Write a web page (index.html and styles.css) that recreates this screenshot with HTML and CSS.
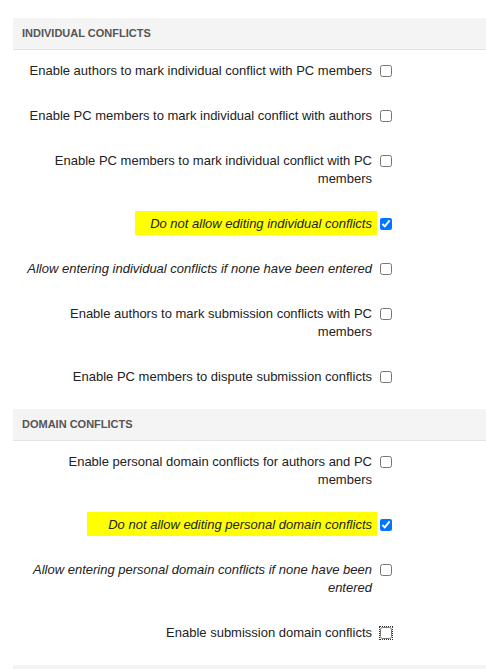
FILE: index.html
```html
<!DOCTYPE html>
<html lang="en">
<head>
    <meta charset="UTF-8">
    <meta name="viewport" content="width=device-width, initial-scale=1.0">
    <title>Conflict settings</title>
    <link rel="stylesheet" href="styles.css">
</head>
<body>
    <div class="settings">
        <h3 class="group-head">Individual conflicts</h3>
        <div class="group">
            <div class="row">
                <label class="label" for="c1">Enable authors to mark individual conflict with PC members</label>
                <input type="checkbox" id="c1">
            </div>
            <div class="row">
                <label class="label" for="c2">Enable PC members to mark individual conflict with authors</label>
                <input type="checkbox" id="c2">
            </div>
            <div class="row">
                <label class="label" for="c3">Enable PC members to mark individual conflict with PC members</label>
                <input type="checkbox" id="c3">
            </div>
            <div class="row">
                <label class="label em" for="c4"><span class="mark mark-a">Do not allow editing individual conflicts</span></label>
                <input type="checkbox" id="c4" checked>
            </div>
            <div class="row">
                <label class="label em" for="c5">Allow entering individual conflicts if none have been entered</label>
                <input type="checkbox" id="c5">
            </div>
            <div class="row">
                <label class="label" for="c6">Enable authors to mark submission conflicts with PC members</label>
                <input type="checkbox" id="c6">
            </div>
            <div class="row">
                <label class="label" for="c7">Enable PC members to dispute submission conflicts</label>
                <input type="checkbox" id="c7">
            </div>
        </div>

        <h3 class="group-head">Domain conflicts</h3>
        <div class="group">
            <div class="row">
                <label class="label" for="d1">Enable personal domain conflicts for authors and PC members</label>
                <input type="checkbox" id="d1">
            </div>
            <div class="row">
                <label class="label em" for="d2"><span class="mark mark-b">Do not allow editing personal domain conflicts</span></label>
                <input type="checkbox" id="d2" checked>
            </div>
            <div class="row">
                <label class="label em" for="d3">Allow entering personal domain conflicts if none have been entered</label>
                <input type="checkbox" id="d3">
            </div>
            <div class="row">
                <label class="label" for="d4">Enable submission domain conflicts</label>
                <input type="checkbox" id="d4" class="focused">
            </div>
        </div>

        <h3 class="group-head"></h3>
    </div>
</body>
</html>
```

FILE: styles.css
```css
body {
    margin: 0;
    padding: 0;
    background: #fff;
    font-family: "Liberation Sans", Arial, sans-serif;
    color: #222;
    overflow: hidden;
}

.settings {
    margin: 18px 0 0 13px;
}

.group-head {
    margin: 0;
    height: 31px;
    padding-left: 9px;
    line-height: 31px;
    background-color: #f4f4f4;
    border-bottom: 1px solid #e3e3e3;
    font-size: 11px;
    font-weight: bold;
    text-transform: uppercase;
    color: #555;
}

.group {
    display: flex;
    flex-direction: column;
    gap: 27px;
    padding: 12px 0 23px 14px;
}

.row {
    display: flex;
    align-items: flex-start;
}

.label {
    width: 345px;
    font-size: 13px;
    line-height: 18px;
    text-align: right;
}

.em {
    font-style: italic;
}

.mark {
    background-color: #ffff00;
    padding: 5px 5px 4px 15px;
    margin-right: -5px;
}

.mark-b {
    padding-left: 21px;
}

input[type="checkbox"] {
    margin: 3px 0 0 8px;
    width: 12px;
    height: 12px;
}

.focused {
    outline: 1px dotted #333;
    outline-offset: 0;
}
```
